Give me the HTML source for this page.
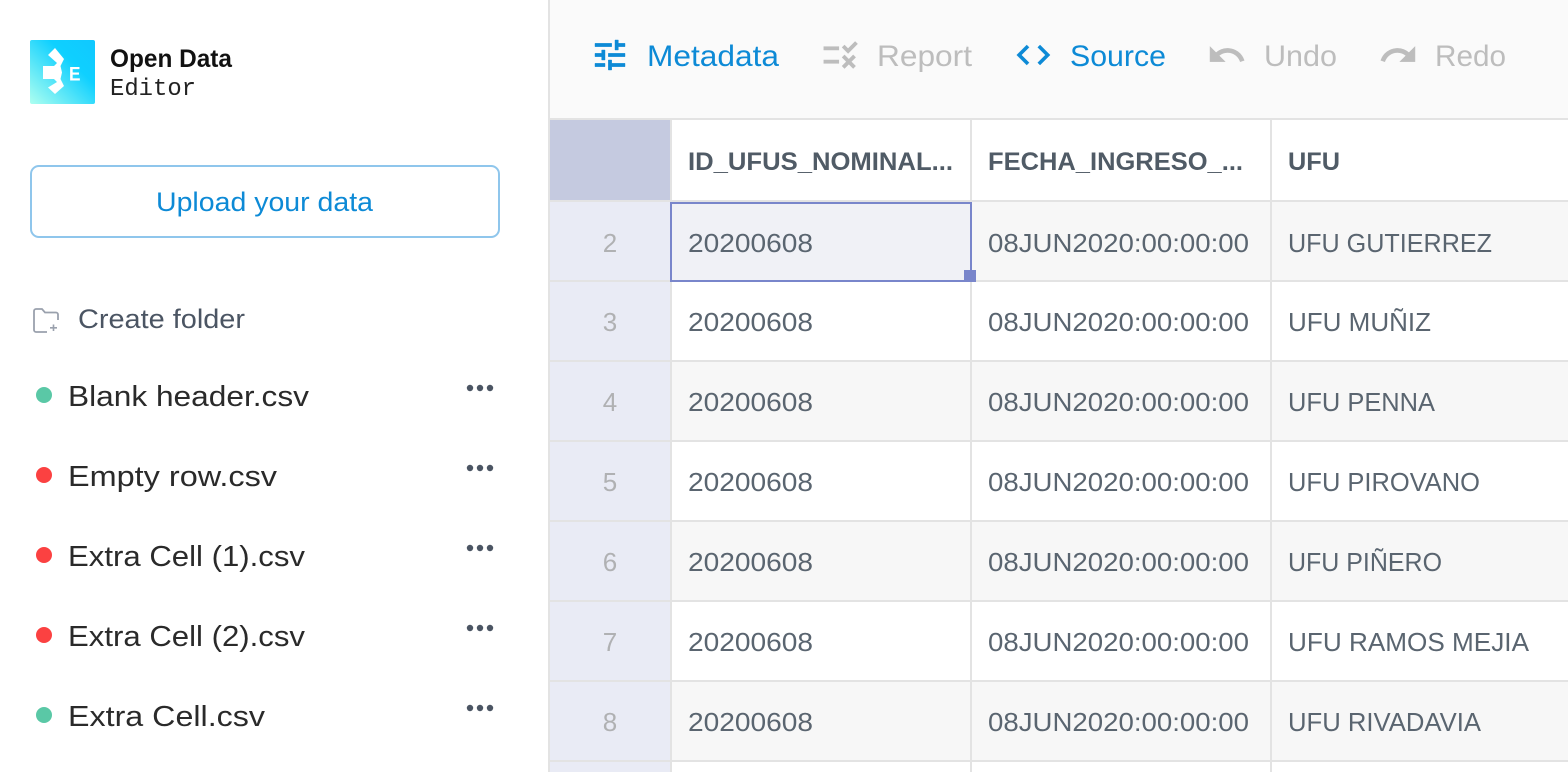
<!DOCTYPE html>
<html lang="en">
<head>
<meta charset="utf-8">
<title>Open Data Editor</title>
<style>
html,body{margin:0;padding:0;width:1568px;height:772px;overflow:hidden;background:#fff}
svg{display:block}
text{font-family:"Liberation Sans",sans-serif}
.cell{font-size:26px;fill:#5a6570}
.head{font-size:25px;font-weight:700;fill:#505b66}
.num{font-size:26px;fill:#b0b1b3;text-anchor:middle}
.file{font-size:29px;fill:#2a2a2a}
.tb{font-size:30px}
.blue{fill:#0d8ad6}
.gray{fill:#bdbdbd}
path.blue{stroke:#0d8ad6;stroke-width:.25}
path.gray{stroke:#bdbdbd;stroke-width:.3}
</style>
</head>
<body>
<svg width="1568" height="772" viewBox="0 0 1568 772" xmlns="http://www.w3.org/2000/svg">
<defs>
<linearGradient id="lg" x1="0" y1="1" x2="1" y2="0">
<stop offset="0" stop-color="#aefff0"/>
<stop offset=".65" stop-color="#0fd0ff"/>
<stop offset="1" stop-color="#10c8ff"/>
</linearGradient>
</defs>

<!-- sidebar -->
<rect x="548" y="0" width="2" height="772" fill="#e3e3e3"/>
<rect x="30" y="40" width="65" height="64" rx="2" fill="url(#lg)"/>
<path d="M48 55 55 48 64 59 60.500 66 62 72.500 60.500 79 64 86 55 94 48 87.500 57 82 54 79 43 79 43 66 54 66 57 63Z" fill="#fff"/>
<text x="69" y="80.700" font-size="19" font-weight="700" fill="#fff" textLength="11.500" lengthAdjust="spacingAndGlyphs">E</text>
<text x="110" y="67" font-size="25" font-weight="700" fill="#111" textLength="122" lengthAdjust="spacingAndGlyphs">Open Data</text>
<text x="110" y="95" font-size="24" fill="#222" style="font-family:'Liberation Mono',monospace" textLength="86" lengthAdjust="spacingAndGlyphs">Editor</text>

<rect x="31" y="166" width="468" height="71" rx="8" fill="#fff" stroke="#8fc6ec" stroke-width="2"/>
<text x="156" y="211" font-size="27" class="blue" textLength="217" lengthAdjust="spacingAndGlyphs">Upload your data</text>

<path d="M34 311a2 2 0 0 1 2-2h6l3 3.500h11a2 2 0 0 1 2 2v5.500M34 311v19a2 2 0 0 0 2 2h11" fill="none" stroke="#9aa1ad" stroke-width="1.800"/>
<path d="M53.500 324.500v6.500M50 327.800h7" fill="none" stroke="#9aa1ad" stroke-width="1.600"/>
<text x="78" y="328" font-size="27" fill="#4b5563" textLength="167" lengthAdjust="spacingAndGlyphs">Create folder</text>

<circle cx="44" cy="395" r="8" fill="#5ac8a6"/>
<text x="68" y="406" class="file" textLength="241" lengthAdjust="spacingAndGlyphs">Blank header.csv</text>
<circle cx="44" cy="475" r="8" fill="#fb4141"/>
<text x="68" y="486" class="file" textLength="209" lengthAdjust="spacingAndGlyphs">Empty row.csv</text>
<circle cx="44" cy="555" r="8" fill="#fb4141"/>
<text x="68" y="566" class="file" textLength="237" lengthAdjust="spacingAndGlyphs">Extra Cell (1).csv</text>
<circle cx="44" cy="635" r="8" fill="#fb4141"/>
<text x="68" y="646" class="file" textLength="237" lengthAdjust="spacingAndGlyphs">Extra Cell (2).csv</text>
<circle cx="44" cy="715" r="8" fill="#5ac8a6"/>
<text x="68" y="726" class="file" textLength="197" lengthAdjust="spacingAndGlyphs">Extra Cell.csv</text>

<g fill="#4b5563">
<circle cx="470" cy="388" r="3.200"/><circle cx="480" cy="388" r="3.200"/><circle cx="490" cy="388" r="3.200"/>
<circle cx="470" cy="468" r="3.200"/><circle cx="480" cy="468" r="3.200"/><circle cx="490" cy="468" r="3.200"/>
<circle cx="470" cy="548" r="3.200"/><circle cx="480" cy="548" r="3.200"/><circle cx="490" cy="548" r="3.200"/>
<circle cx="470" cy="628" r="3.200"/><circle cx="480" cy="628" r="3.200"/><circle cx="490" cy="628" r="3.200"/>
<circle cx="470" cy="708" r="3.200"/><circle cx="480" cy="708" r="3.200"/><circle cx="490" cy="708" r="3.200"/>
</g>

<!-- toolbar -->
<rect x="550" y="0" width="1018" height="118" fill="#fafafa"/>
<path transform="translate(590 35) scale(1.667)" class="blue" d="M3 17v2h6v-2H3zM3 5v2h10V5H3zm10 16v-2h8v-2h-8v-2h-2v6h2zM7 9v2H3v2h4v2h2V9H7zm14 4v-2H11v2h10zm-6-4h2V7h4V5h-4V3h-2v6z"/>
<text x="647" y="66" class="tb blue" textLength="132" lengthAdjust="spacingAndGlyphs">Metadata</text>
<path transform="translate(820.500 35) scale(1.667)" class="gray" d="M16.540 11 13 7.460l1.410-1.410 2.120 2.120 4.240-4.240 1.410 1.410L16.540 11zM11 7H2v2h9V7zm10 6.410L19.590 12 17 14.590 14.410 12 13 13.410 15.590 16 13 18.590 14.410 20 17 17.410 19.590 20 21 18.590 18.410 16 21 13.410zM11 15H2v2h9v-2z"/>
<text x="877" y="66" class="tb gray" textLength="95" lengthAdjust="spacingAndGlyphs">Report</text>
<path transform="translate(1013.400 35) scale(1.667)" class="blue" d="M9.400 16.600 4.800 12l4.600-4.600L8 6l-6 6 6 6 1.400-1.400zm5.200 0 4.600-4.600-4.600-4.600L16 6l6 6-6 6-1.400-1.400z"/>
<text x="1070" y="66" class="tb blue" textLength="96" lengthAdjust="spacingAndGlyphs">Source</text>
<path transform="translate(1206.700 35) scale(1.667)" class="gray" d="M12.500 8c-2.650 0-5.050.99-6.900 2.600L2 7v9h9l-3.620-3.620c1.390-1.160 3.160-1.880 5.120-1.880 3.540 0 6.550 2.310 7.600 5.500l2.370-.78C21.080 11.030 17.150 8 12.500 8z"/>
<text x="1264" y="66" class="tb gray" textLength="73" lengthAdjust="spacingAndGlyphs">Undo</text>
<path transform="translate(1378.300 35) scale(1.667)" class="gray" d="M18.400 10.600C16.550 8.990 14.150 8 11.500 8c-4.650 0-8.580 3.030-9.960 7.220L3.900 16c1.050-3.190 4.050-5.500 7.600-5.500 1.950 0 3.730.72 5.120 1.880L13 16h9V7l-3.600 3.600z"/>
<text x="1435" y="66" class="tb gray" textLength="71" lengthAdjust="spacingAndGlyphs">Redo</text>

<!-- grid backgrounds -->
<rect x="550" y="118" width="1018" height="2" fill="#e3e3e3"/>
<rect x="550" y="120" width="120" height="80" fill="#c5cae0"/>
<rect x="550" y="202" width="120" height="570" fill="#e9ebf5"/>
<rect x="672" y="202" width="896" height="78" fill="#f7f7f7"/>
<rect x="672" y="362" width="896" height="78" fill="#f7f7f7"/>
<rect x="672" y="522" width="896" height="78" fill="#f7f7f7"/>
<rect x="672" y="682" width="896" height="78" fill="#f7f7f7"/>
<g fill="#e3e3e3">
<rect x="550" y="200" width="1018" height="2"/>
<rect x="550" y="280" width="1018" height="2"/>
<rect x="550" y="360" width="1018" height="2"/>
<rect x="550" y="440" width="1018" height="2"/>
<rect x="550" y="520" width="1018" height="2"/>
<rect x="550" y="600" width="1018" height="2"/>
<rect x="550" y="680" width="1018" height="2"/>
<rect x="550" y="760" width="1018" height="2"/>
<rect x="670" y="120" width="2" height="652"/>
<rect x="970" y="120" width="2" height="652"/>
<rect x="1270" y="120" width="2" height="652"/>
</g>

<!-- selected -->
<rect x="671" y="203" width="300" height="78" fill="#f0f1f6" stroke="#7986cb" stroke-width="2"/>
<rect x="964" y="270" width="12" height="12" fill="#7986cb"/>

<!-- header -->
<text x="688" y="170" class="head" textLength="265" lengthAdjust="spacingAndGlyphs">ID_UFUS_NOMINAL...</text>
<text x="988" y="170" class="head" textLength="255" lengthAdjust="spacingAndGlyphs">FECHA_INGRESO_...</text>
<text x="1288" y="170" class="head" textLength="52" lengthAdjust="spacingAndGlyphs">UFU</text>

<!-- rows -->
<text x="610" y="252" class="num">2</text>
<text x="688" y="252" class="cell" textLength="125" lengthAdjust="spacingAndGlyphs">20200608</text>
<text x="988" y="252" class="cell" textLength="261" lengthAdjust="spacingAndGlyphs">08JUN2020:00:00:00</text>
<text x="1288" y="252" class="cell" textLength="204" lengthAdjust="spacingAndGlyphs">UFU GUTIERREZ</text>

<text x="610" y="331" class="num">3</text>
<text x="688" y="331" class="cell" textLength="125" lengthAdjust="spacingAndGlyphs">20200608</text>
<text x="988" y="331" class="cell" textLength="261" lengthAdjust="spacingAndGlyphs">08JUN2020:00:00:00</text>
<text x="1288" y="331" class="cell" textLength="143" lengthAdjust="spacingAndGlyphs">UFU MUÑIZ</text>

<text x="610" y="411" class="num">4</text>
<text x="688" y="411" class="cell" textLength="125" lengthAdjust="spacingAndGlyphs">20200608</text>
<text x="988" y="411" class="cell" textLength="261" lengthAdjust="spacingAndGlyphs">08JUN2020:00:00:00</text>
<text x="1288" y="411" class="cell" textLength="147" lengthAdjust="spacingAndGlyphs">UFU PENNA</text>

<text x="610" y="491" class="num">5</text>
<text x="688" y="491" class="cell" textLength="125" lengthAdjust="spacingAndGlyphs">20200608</text>
<text x="988" y="491" class="cell" textLength="261" lengthAdjust="spacingAndGlyphs">08JUN2020:00:00:00</text>
<text x="1288" y="491" class="cell" textLength="192" lengthAdjust="spacingAndGlyphs">UFU PIROVANO</text>

<text x="610" y="571" class="num">6</text>
<text x="688" y="571" class="cell" textLength="125" lengthAdjust="spacingAndGlyphs">20200608</text>
<text x="988" y="571" class="cell" textLength="261" lengthAdjust="spacingAndGlyphs">08JUN2020:00:00:00</text>
<text x="1288" y="571" class="cell" textLength="154" lengthAdjust="spacingAndGlyphs">UFU PIÑERO</text>

<text x="610" y="651" class="num">7</text>
<text x="688" y="651" class="cell" textLength="125" lengthAdjust="spacingAndGlyphs">20200608</text>
<text x="988" y="651" class="cell" textLength="261" lengthAdjust="spacingAndGlyphs">08JUN2020:00:00:00</text>
<text x="1288" y="651" class="cell" textLength="241" lengthAdjust="spacingAndGlyphs">UFU RAMOS MEJIA</text>

<text x="610" y="731" class="num">8</text>
<text x="688" y="731" class="cell" textLength="125" lengthAdjust="spacingAndGlyphs">20200608</text>
<text x="988" y="731" class="cell" textLength="261" lengthAdjust="spacingAndGlyphs">08JUN2020:00:00:00</text>
<text x="1288" y="731" class="cell" textLength="193" lengthAdjust="spacingAndGlyphs">UFU RIVADAVIA</text>
</svg>
</body>
</html>
